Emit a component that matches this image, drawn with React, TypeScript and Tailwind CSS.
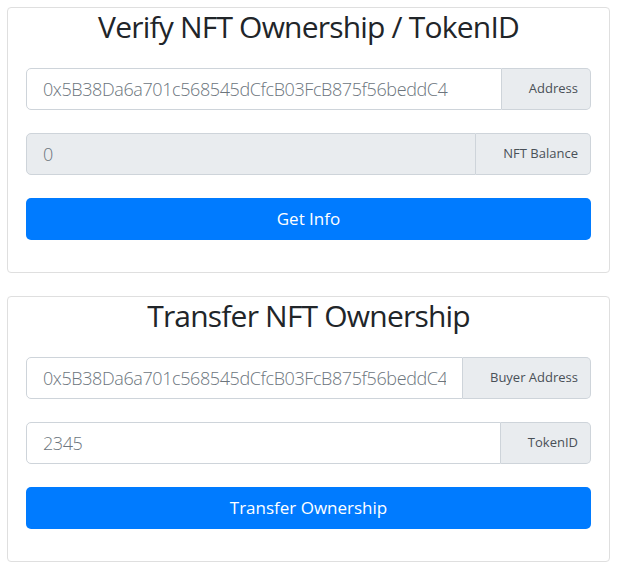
const font = { fontFamily: '"Open Sans", "Noto Sans", sans-serif' }

function Field({ value, label, disabled }: { value: string; label: string; disabled?: boolean }) {
  return (
    <div className="flex h-[42px]">
      <input
        readOnly
        value={value}
        className={`flex-1 min-w-0 border border-[#ced4da] rounded-l-[5px] px-4 text-[18px] tracking-[-0.4px] font-light text-[#6c757d] outline-none ${disabled ? 'bg-[#e9ecef]' : 'bg-white'}`}
      />
      <div className="flex items-center border border-l-0 border-[#ced4da] bg-[#e9ecef] rounded-r-[5px] pl-[27px] pr-3 text-[13px] text-[#495057] whitespace-nowrap">
        {label}
      </div>
    </div>
  )
}

function Card({ title, children }: { title: string; children: React.ReactNode }) {
  return (
    <div className="border border-[#dfdfdf] rounded-[4px] px-[18px] pb-[32px]">
      <h2 className="text-center text-[30px] leading-[38px] tracking-[-0.8px] font-medium text-[#212529] mb-[22px]">{title}</h2>
      <div className="flex flex-col gap-[23px]">{children}</div>
    </div>
  )
}

export default function App() {
  const addr = '0x5B38Da6a701c568545dCfcB03FcB875f56beddC4'
  return (
    <div className="min-h-[572px] bg-white pt-[7px] pl-[7px]" style={font}>
      <div className="w-[603px] flex flex-col gap-[23px]">
        <Card title="Verify NFT Ownership / TokenID">
          <Field value={addr} label="Address" />
          <Field value="0" label="NFT Balance" disabled />
          <button className="h-[42px] rounded-[5px] bg-[#007bff] text-white text-[17px]">Get Info</button>
        </Card>
        <Card title="Transfer NFT Ownership">
          <Field value={addr} label="Buyer Address" />
          <Field value="2345" label="TokenID" />
          <button className="h-[42px] rounded-[5px] bg-[#007bff] text-white text-[17px]">Transfer Ownership</button>
        </Card>
      </div>
    </div>
  )
}
